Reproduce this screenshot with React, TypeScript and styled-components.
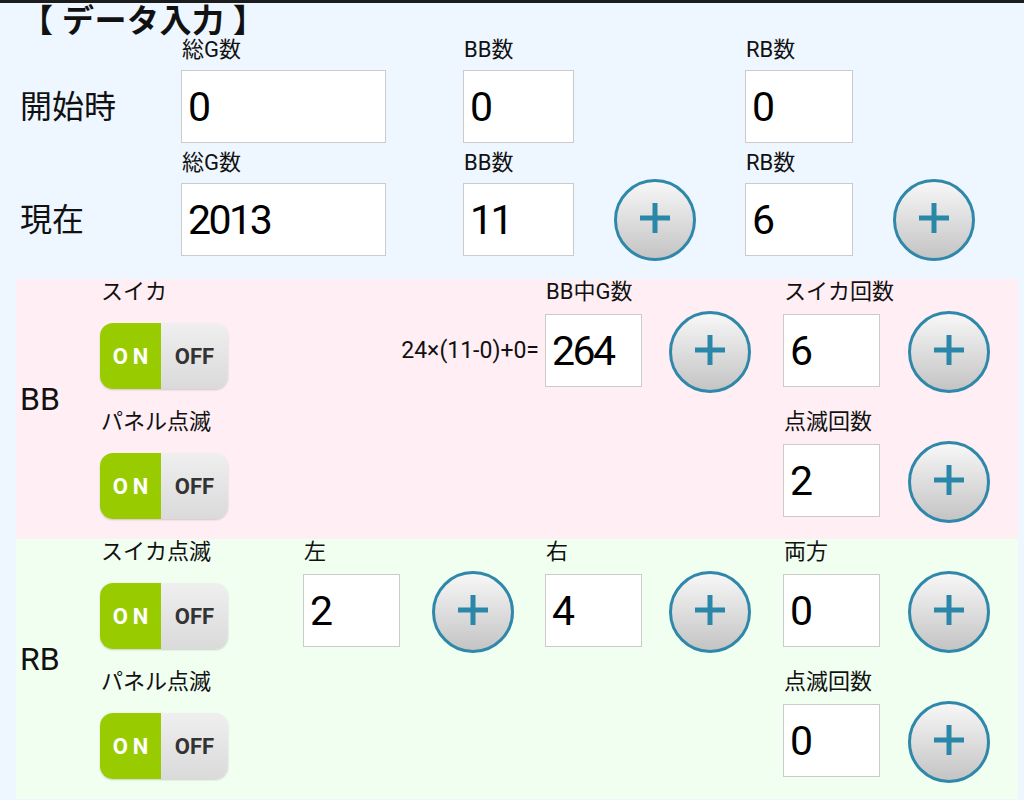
import React from 'react';

import styled, { createGlobalStyle } from 'styled-components';

const GlobalStyle = createGlobalStyle`
  html, body {
    margin: 0;
    padding: 0;
    background: #eef6ff;
  }

  body {
    font-family: Roboto, 'Noto Sans CJK JP', sans-serif;
    color: #111;
  }
`;

const Page = styled.div`
  border-top: 3px solid #1c1c1c;
  padding: 0 6px 0 16px;
`;

const Title = styled.h1`
  margin: 0 0 0 5px;
  font-size: 32px;
  font-weight: 700;
  line-height: 36px;
  letter-spacing: 0.5px;
  color: #111;
`;

const TopArea = styled.div`
  display: flex;
  flex-direction: column;
  gap: 9px;
  padding-left: 6px;
  margin-bottom: 23px;
`;

const TopRow = styled.div`
  display: grid;
  grid-template-columns: 159px 282px 151px 131px 148px 81px;
  grid-template-rows: 22px 73px;
  row-gap: 9px;
  align-items: start;
`;

const SectionRow = styled.div`
  display: grid;
  grid-template-columns: 203px 129px 113px 124px 114px 125px 81px;
  grid-template-rows: 22px 73px;
  row-gap: 11px;
  align-items: start;
`;

const RowTitle = styled.span`
  grid-row: 2;
  grid-column: 1;
  align-self: center;
  margin-left: -2px;
  font-size: 32px;
  line-height: 1;
`;

const FieldLabel = styled.span<{ $col: number }>`
  grid-row: 1;
  grid-column: ${(p) => p.$col};
  padding-left: 1px;
  font-size: 22px;
  line-height: 22px;
  white-space: nowrap;
`;

const NumBox = styled.input<{ $col: number; $w: number }>`
  grid-row: 2;
  grid-column: ${(p) => p.$col};
  width: ${(p) => p.$w}px;
  height: 73px;
  box-sizing: border-box;
  margin: 0;
  padding: 0 0 0 6px;
  border: 1px solid #cbcbcb;
  background: #fff;
  font-family: Roboto, sans-serif;
  font-size: 41px;
  letter-spacing: -2.5px;
  color: #000;
  outline: none;
`;

const PlusButton = styled.button<{ $col: number; $shift: number }>`
  grid-row: 2;
  grid-column: ${(p) => p.$col};
  margin-top: ${(p) => p.$shift}px;
  width: 82px;
  height: 82px;
  box-sizing: border-box;
  padding: 0 0 4px;
  border: 3px solid #2f88aa;
  border-radius: 50%;
  background: linear-gradient(#f7f7f7, #c4c4c4);
  display: flex;
  align-items: center;
  justify-content: center;
  cursor: pointer;
`;

const Formula = styled.span`
  grid-row: 2;
  grid-column: 2 / 4;
  justify-self: end;
  align-self: center;
  padding-right: 6px;
  font-size: 23px;
  white-space: nowrap;
`;

const Toggle = styled.div`
  grid-row: 2;
  grid-column: 1;
  margin-top: 9px;
  width: 128px;
  height: 66px;
  border-radius: 13px;
  overflow: hidden;
  display: flex;
  box-shadow: 0 1px 2px rgba(0, 0, 0, 0.18);
  font-family: Roboto, sans-serif;
  font-size: 22px;
  font-weight: 700;
`;

const ToggleOn = styled.span`
  width: 61px;
  padding-left: 5px;
  box-sizing: border-box;
  background: #99cc00;
  color: #fff;
  letter-spacing: 5px;
  display: flex;
  align-items: center;
  justify-content: center;
`;

const ToggleOff = styled.span`
  flex: 1;
  background: linear-gradient(#efefef, #dadada);
  color: #333;
  display: flex;
  align-items: center;
  justify-content: center;
`;

const Section = styled.section<{ $bg: string }>`
  display: grid;
  grid-template-columns: 84px 1fr;
  padding: 2px 0 22px;
  background: ${(p) => p.$bg};
`;

const SectionTitle = styled.span`
  align-self: center;
  padding-left: 4px;
  font-size: 32px;
  line-height: 1;
`;

const SectionBody = styled.div`
  display: flex;
  flex-direction: column;
  gap: 24px;
`;

const PlusIcon = () => (
  <svg width='32' height='32' viewBox='0 0 32 32'>
    <path d='M16 1V31M1 16H31' stroke='#2a87a8' strokeWidth='5' fill='none' />
  </svg>
);

const Plus = ({ col, shift = -3 }: { col: number; shift?: number }) => (
  <PlusButton $col={col} $shift={shift}>
    <PlusIcon />
  </PlusButton>
);

const Switch = () => (
  <Toggle>
    <ToggleOn>ON</ToggleOn>
    <ToggleOff>OFF</ToggleOff>
  </Toggle>
);

const App = () => (
  <Page>
    <GlobalStyle />
    <Title>【 データ入力 】</Title>

    <TopArea>
      <TopRow>
        <FieldLabel $col={2}>総G数</FieldLabel>
        <FieldLabel $col={3}>BB数</FieldLabel>
        <FieldLabel $col={5}>RB数</FieldLabel>
        <RowTitle>開始時</RowTitle>
        <NumBox $col={2} $w={205} defaultValue='0' />
        <NumBox $col={3} $w={111} defaultValue='0' />
        <NumBox $col={5} $w={108} defaultValue='0' />
      </TopRow>
      <TopRow>
        <FieldLabel $col={2}>総G数</FieldLabel>
        <FieldLabel $col={3}>BB数</FieldLabel>
        <FieldLabel $col={5}>RB数</FieldLabel>
        <RowTitle>現在</RowTitle>
        <NumBox $col={2} $w={205} defaultValue='2013' />
        <NumBox $col={3} $w={111} defaultValue='11' />
        <Plus col={4} shift={-4} />
        <NumBox $col={5} $w={108} defaultValue='6' />
        <Plus col={6} shift={-4} />
      </TopRow>
    </TopArea>

    <Section $bg='#ffeef4'>
      <SectionTitle>BB</SectionTitle>
      <SectionBody>
        <SectionRow>
          <FieldLabel $col={1}>スイカ</FieldLabel>
          <FieldLabel $col={4}>BB中G数</FieldLabel>
          <FieldLabel $col={6}>スイカ回数</FieldLabel>
          <Switch />
          <Formula>24×(11-0)+0=</Formula>
          <NumBox $col={4} $w={97} defaultValue='264' />
          <Plus col={5} />
          <NumBox $col={6} $w={97} defaultValue='6' />
          <Plus col={7} />
        </SectionRow>
        <SectionRow>
          <FieldLabel $col={1}>パネル点滅</FieldLabel>
          <FieldLabel $col={6}>点滅回数</FieldLabel>
          <Switch />
          <NumBox $col={6} $w={97} defaultValue='2' />
          <Plus col={7} />
        </SectionRow>
      </SectionBody>
    </Section>

    <Section $bg='#f0fff0'>
      <SectionTitle>RB</SectionTitle>
      <SectionBody>
        <SectionRow>
          <FieldLabel $col={1}>スイカ点滅</FieldLabel>
          <FieldLabel $col={2}>左</FieldLabel>
          <FieldLabel $col={4}>右</FieldLabel>
          <FieldLabel $col={6}>両方</FieldLabel>
          <Switch />
          <NumBox $col={2} $w={97} defaultValue='2' />
          <Plus col={3} />
          <NumBox $col={4} $w={97} defaultValue='4' />
          <Plus col={5} />
          <NumBox $col={6} $w={97} defaultValue='0' />
          <Plus col={7} />
        </SectionRow>
        <SectionRow>
          <FieldLabel $col={1}>パネル点滅</FieldLabel>
          <FieldLabel $col={6}>点滅回数</FieldLabel>
          <Switch />
          <NumBox $col={6} $w={97} defaultValue='0' />
          <Plus col={7} />
        </SectionRow>
      </SectionBody>
    </Section>
  </Page>
);

export default App;
